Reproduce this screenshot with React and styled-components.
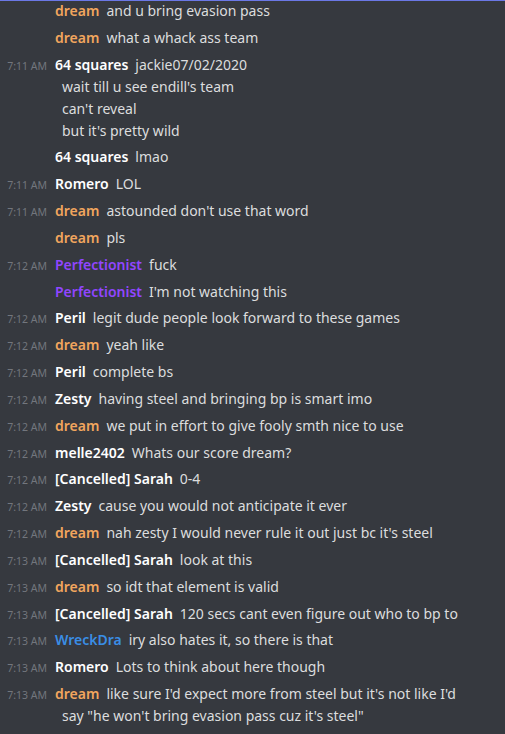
import React from 'react';
import styled, { createGlobalStyle } from 'styled-components';

const GlobalStyle = createGlobalStyle`
    html, body {
        margin: 0;
        padding: 0;
        background: #36393f;
    }
    body {
        font-family: "Noto Sans", "Open Sans", sans-serif;
        -webkit-font-smoothing: antialiased;
    }
`;

const colors = {
    dream: '#f2a65e',
    purple: '#9146ff',
    blue: '#3a8ee6',
    white: '#ffffff',
};

const Frame = styled.div`
    width: 505px;
    height: 734px;
    overflow: hidden;
    background: #36393f;
    position: relative;
    &::before {
        content: "";
        position: absolute;
        left: 0;
        right: 0;
        top: 0;
        height: 1px;
        background: #6b78e6;
        z-index: 1;
    }
`;

const List = styled.div`
    margin-top: -2.4px;
`;

const Row = styled.div`
    display: flex;
    align-items: flex-start;
    padding: 2.4px 0 2.45px;
`;

const Time = styled.span`
    width: 47px;
    height: 22px;
    flex: none;
    text-align: right;
    padding-right: 8px;
    box-sizing: content-box;
    font-size: 10.5px;
    line-height: 24px;
    color: #72767d;
    white-space: nowrap;
    overflow: hidden;
`;

const Body = styled.div`
    flex: 1;
    min-width: 0;
    font-size: 14px;
    line-height: 22px;
    color: #dcddde;
`;

const Name = styled.span`
    font-weight: 600;
    color: ${p => p.$color};
    margin-right: 7px;
`;

const Extra = styled.div`
    padding-left: 7px;
`;

const messages = [
    { name: 'dream', color: colors.dream, text: 'and u bring evasion pass' },
    { name: 'dream', color: colors.dream, text: 'what a whack ass team' },
    {
        time: '7:11 AM', name: '64 squares', color: colors.white, text: 'jackie07/02/2020',
        lines: ["wait till u see endill's team", "can't reveal", "but it's pretty wild"],
    },
    { name: '64 squares', color: colors.white, text: 'lmao' },
    { time: '7:11 AM', name: 'Romero', color: colors.white, text: 'LOL' },
    { time: '7:11 AM', name: 'dream', color: colors.dream, text: "astounded don't use that word" },
    { name: 'dream', color: colors.dream, text: 'pls' },
    { time: '7:12 AM', name: 'Perfectionist', color: colors.purple, text: 'fuck' },
    { name: 'Perfectionist', color: colors.purple, text: "I'm not watching this" },
    { time: '7:12 AM', name: 'Peril', color: colors.white, text: 'legit dude people look forward to these games' },
    { time: '7:12 AM', name: 'dream', color: colors.dream, text: 'yeah like' },
    { time: '7:12 AM', name: 'Peril', color: colors.white, text: 'complete bs' },
    { time: '7:12 AM', name: 'Zesty', color: colors.white, text: 'having steel and bringing bp is smart imo' },
    { time: '7:12 AM', name: 'dream', color: colors.dream, text: 'we put in effort to give fooly smth nice to use' },
    { time: '7:12 AM', name: 'melle2402', color: colors.white, text: 'Whats our score dream?' },
    { time: '7:12 AM', name: '[Cancelled] Sarah', color: colors.white, text: '0-4' },
    { time: '7:12 AM', name: 'Zesty', color: colors.white, text: 'cause you would not anticipate it ever' },
    { time: '7:12 AM', name: 'dream', color: colors.dream, text: "nah zesty I would never rule it out just bc it's steel" },
    { time: '7:13 AM', name: '[Cancelled] Sarah', color: colors.white, text: 'look at this' },
    { time: '7:13 AM', name: 'dream', color: colors.dream, text: 'so idt that element is valid' },
    { time: '7:13 AM', name: '[Cancelled] Sarah', color: colors.white, text: '120 secs cant even figure out who to bp to' },
    { time: '7:13 AM', name: 'WreckDra', color: colors.blue, text: 'iry also hates it, so there is that' },
    { time: '7:13 AM', name: 'Romero', color: colors.white, text: 'Lots to think about here though' },
    {
        time: '7:13 AM', name: 'dream', color: colors.dream, text: "like sure I'd expect more from steel but it's not like I'd",
        lines: ['say "he won\'t bring evasion pass cuz it\'s steel"'],
    },
];

const App = () => {
    return (
        <Frame>
            <GlobalStyle />
            <List>
                {messages.map((m, i) => (
                    <Row key={i}>
                        <Time>{m.time || ''}</Time>
                        <Body>
                            <Name $color={m.color}>{m.name}</Name>
                            {m.text}
                            {m.lines && m.lines.map((l, j) => <Extra key={j}>{l}</Extra>)}
                        </Body>
                    </Row>
                ))}
            </List>
        </Frame>
    );
};

export default App;
